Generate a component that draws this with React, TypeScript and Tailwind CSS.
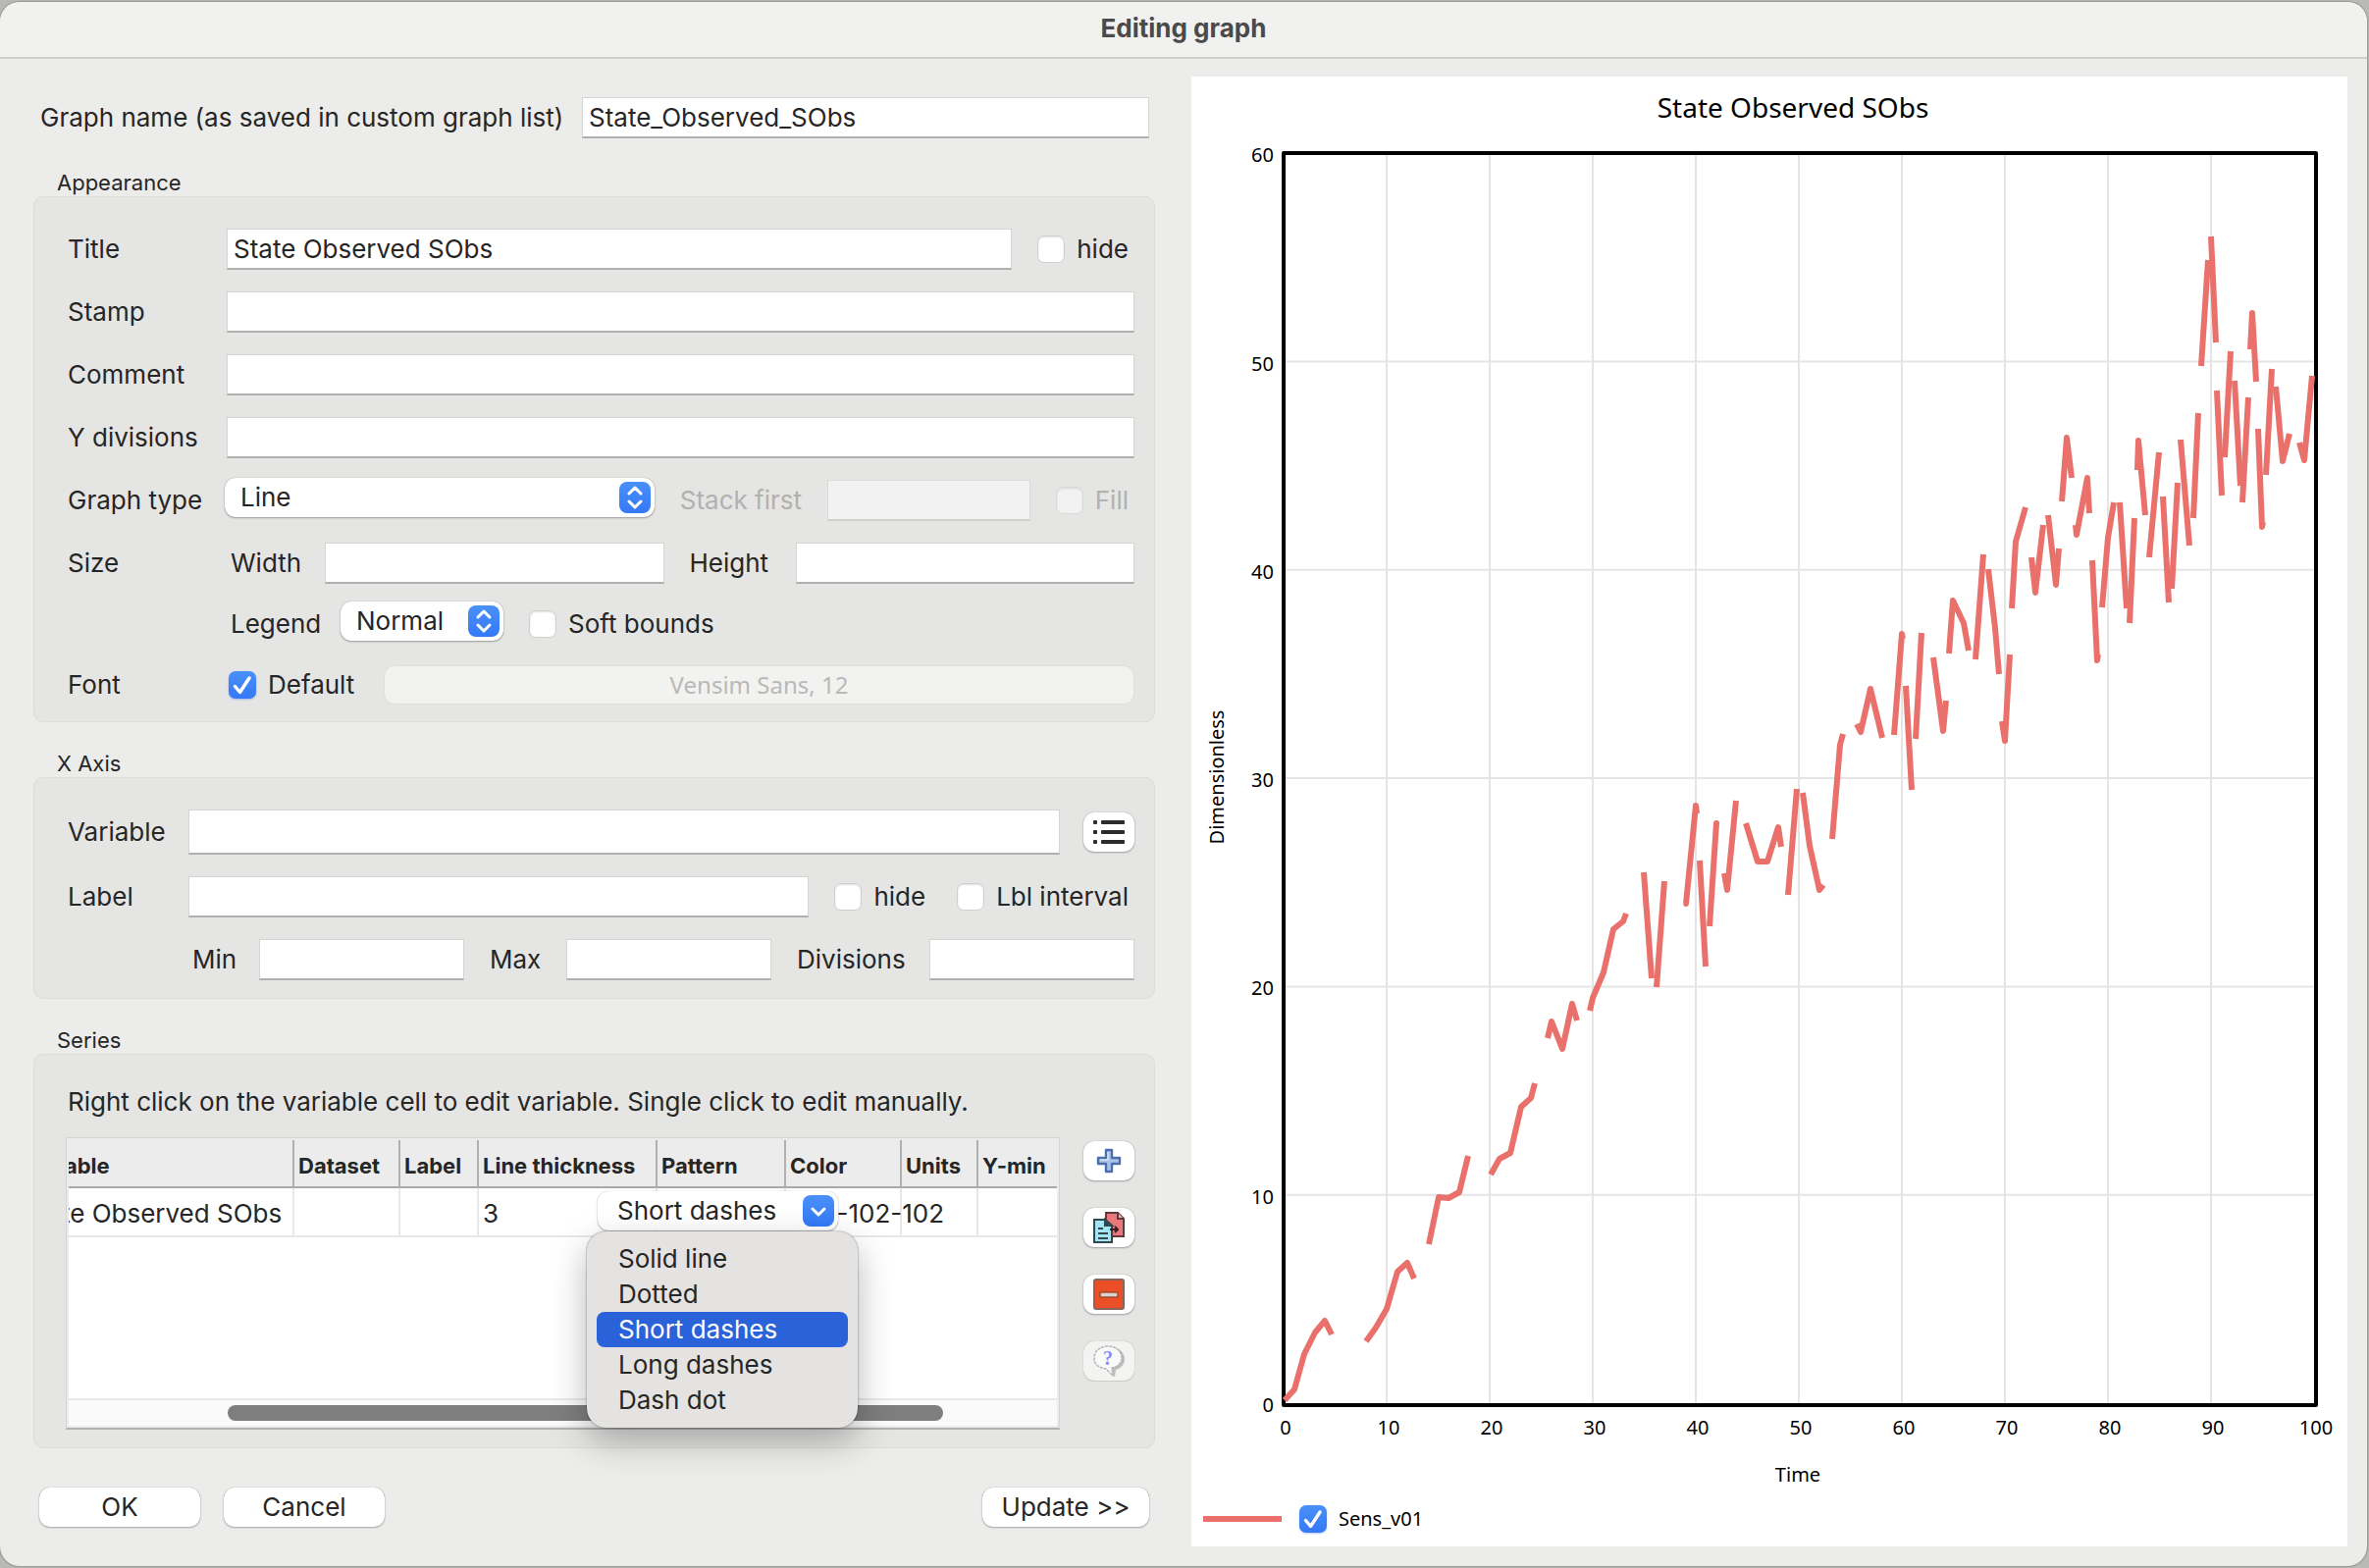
import type { ReactNode } from 'react'

// Each run of the series is drawn on its own, missing samples leave a gap
const seriesRuns = [
  '95,1349 105,1338 115,1302 126,1280 136,1268 143,1282',
  '178,1289 188,1275 199,1256 210,1218 220,1209 227,1225',
  '242,1190 252,1142 262,1143 273,1137 282,1100',
  '305,1119 314,1103 325,1097 336,1050 346,1041 350,1026',
  '363,980 367,963 378,991 388,945 393,962',
  '406,952 409,939 420,913 430,869 440,861 443,853',
  '461,811 469,919',
  '474,928 482,820',
  '503,842 504,843 514,743 515,751',
  '518,799 524,907',
  '528,866 535,761 535,763',
  '543,812 546,829 555,738',
  '565,761 577,800 587,800 598,765 601,785',
  '608,834 617,726',
  '623,730 630,784 640,829 644,824',
  '653,777 661,681 664,670',
  '678,660 682,668 692,624 704,674',
  '716,671 724,568 725,573',
  '728,621 734,727',
  '738,675 744,567',
  '756,592 766,667 769,636',
  '772,588 776,534 787,557 792,585',
  '799,594 807,487',
  '812,502 819,562 823,609',
  '826,657 829,677 834,589',
  '836,542 840,474 850,439',
  '856,490 860,526 868,457',
  '873,447 881,518 884,481',
  '887,433 892,368 897,409',
  '901,457 902,467 913,409 915,445',
  '918,493 923,595 924,589',
  '928,541 934,470 940,434',
  '946,434 953,542',
  '956,557 961,450',
  '964,401 965,371 972,447',
  '976,490 986,383',
  '990,428 996,536',
  '999,522 1005,414',
  '1008,370 1017,478',
  '1021,450 1026,343',
  '1029,295 1036,187',
  '1039,163 1044,271',
  '1045,320 1050,427',
  '1053,388 1059,280',
  '1063,310 1069,417',
  '1071,434 1077,327',
  '1079,278 1081,241 1085,311',
  '1087,359 1091,459 1092,454',
  '1095,406 1101,298',
  '1105,316 1112,392 1119,364',
  '1129,373 1134,391 1142,305',
]

const xTicks = [0, 10, 20, 30, 40, 50, 60, 70, 80, 90, 100]
const yTicks = [0, 10, 20, 30, 40, 50, 60]

const columns = [
  { label: 'Variable', width: 'w-[280px]', value: 'State Observed SObs' },
  { label: 'Dataset', width: 'w-[108px]', value: '' },
  { label: 'Label', width: 'w-[80px]', value: '' },
  { label: 'Line thickness', width: 'w-[182px]', value: '3' },
  { label: 'Pattern', width: 'w-[131px]', value: '' },
  { label: 'Color', width: 'w-[118px]', value: '255-102-102' },
  { label: 'Units', width: 'w-[78px]', value: '' },
  { label: 'Y-min', width: 'w-[83px]', value: '' },
]

const patterns = ['Solid line', 'Dotted', 'Short dashes', 'Long dashes', 'Dash dot']

function TextField({ id, value, className = '', disabled }: {
  id: string
  value?: string
  className?: string
  disabled?: boolean
}) {
  return (
    <input
      id={id}
      type="text"
      defaultValue={value}
      disabled={disabled}
      className={`h-[42px] min-w-0 border border-b-2 border-[#d4d4d3] border-b-[#b0b0b0] bg-white px-1.5 outline-none disabled:border-[#dadad9] disabled:border-b-[#cfcfce] disabled:bg-[#f2f2f2] ${className}`}
    />
  )
}

function Checkbox({ children, checked, disabled, className = '' }: {
  children: ReactNode
  checked?: boolean
  disabled?: boolean
  className?: string
}) {
  return (
    <label className={`flex items-center gap-3 whitespace-nowrap ${disabled ? 'text-[#b1b1b0]' : ''} ${className}`}>
      <span className="relative size-7 shrink-0">
        <input
          type="checkbox"
          defaultChecked={checked}
          disabled={disabled}
          className="peer block size-7 appearance-none rounded-[7px] border border-[#cfcfce] bg-white shadow-[inset_0_1px_2px_rgba(0,0,0,0.12)] checked:border-0 checked:bg-linear-to-b checked:from-[#4a90f8] checked:to-[#3478f6] checked:shadow-[0_1px_2px_rgba(52,120,246,0.4)] disabled:border-[#dadad9] disabled:bg-[#f2f2f2]"
        />
        <svg viewBox="0 0 28 28" fill="none" className="pointer-events-none absolute inset-0 hidden peer-checked:block">
          <path d="M6.5 15.5 11.5 21.5 21 7" stroke="white" strokeWidth="3.4" strokeLinecap="round" strokeLinejoin="round" />
        </svg>
      </span>
      {children}
    </label>
  )
}

function Popup({ id, value, className }: { id: string; value: string; className: string }) {
  return (
    <span className={`relative mb-1.5 ${className}`}>
      <select
        id={id}
        className="block h-10 w-full appearance-none rounded-[11px] bg-white pl-4 shadow-[0_0_1px_rgba(0,0,0,0.4),0_1px_2px_rgba(0,0,0,0.3)] outline-none"
      >
        <option>{value}</option>
      </select>
      <span className="pointer-events-none absolute top-1 right-1 flex size-8 items-center justify-center rounded-lg bg-linear-to-b from-[#4a90f8] to-[#3478f6]">
        <svg width="32" height="32" viewBox="0 0 32 32" fill="none">
          <path d="M10 12 16 6 22 12M10 20 16 26 22 20" stroke="white" strokeWidth="3" strokeLinecap="round" strokeLinejoin="round" />
        </svg>
      </span>
    </span>
  )
}

function PushButton({ children, className }: { children: ReactNode; className: string }) {
  return (
    <button
      type="button"
      className={`h-10 rounded-[11px] bg-white shadow-[0_0_1px_rgba(0,0,0,0.4),0_1px_2px_rgba(0,0,0,0.28)] ${className}`}
    >
      {children}
    </button>
  )
}

function IconButton({ label, children, disabled }: { label: string; children: ReactNode; disabled?: boolean }) {
  return (
    <button
      type="button"
      aria-label={label}
      disabled={disabled}
      className="flex h-10 w-[52px] shrink-0 items-center justify-center rounded-[11px] bg-white shadow-[0_0_1px_rgba(0,0,0,0.4),0_1px_2px_rgba(0,0,0,0.28)] disabled:bg-[#f3f3f2] disabled:shadow-[0_0_1px_rgba(0,0,0,0.3),0_1px_1px_rgba(0,0,0,0.1)]"
    >
      {children}
    </button>
  )
}

function Group({ title, children, className }: { title: string; children: ReactNode; className: string }) {
  return (
    <section>
      <h2 className="pl-6 text-[22px] leading-7">{title}</h2>
      <div className={`flex flex-col rounded-[10px] border border-[#dcdcdb] bg-[#e5e5e4] pt-8 pr-5 pl-[34px] ${className}`}>
        {children}
      </div>
    </section>
  )
}

function Chart() {
  return (
    <svg viewBox="0 0 1178 1442" className="block w-full font-['Noto_Sans',sans-serif]" fill="black" fontSize="20">
      <text x="613" y="42" fontSize="28" textAnchor="middle">State Observed SObs</text>
      {xTicks.slice(1, -1).map((t) => (
        <path key={t} d={`M${94 + t * 10.5} 80V1352`} stroke="#e5e5e5" strokeWidth="2" />
      ))}
      {yTicks.slice(1, -1).map((v) => (
        <path key={v} d={`M96 ${1352 - v * 21.23}H1144`} stroke="#e5e5e5" strokeWidth="2" />
      ))}
      <rect x="94" y="78" width="1052" height="1276" fill="none" stroke="black" strokeWidth="4" strokeLinejoin="round" />
      {seriesRuns.map((points) => (
        <polyline key={points} points={points} fill="none" stroke="#ea706b" strokeWidth="6" strokeLinejoin="round" />
      ))}
      {xTicks.map((t) => (
        <text key={t} x={96 + t * 10.5} y="1384" textAnchor="middle">{t}</text>
      ))}
      {yTicks.map((v) => (
        <text key={v} x="84" y={1361 - v * 21.23} textAnchor="end">{v}</text>
      ))}
      <text x="618" y="1432" textAnchor="middle">Time</text>
      <text transform="translate(33 714) rotate(-90)" textAnchor="middle">Dimensionless</text>
    </svg>
  )
}

function SeriesTable() {
  return (
    <div className="relative min-w-0 flex-1">
      <div className="flex h-[298px] flex-col overflow-hidden border border-b-2 border-[#d4d4d3] border-b-[#b0b0b0] bg-[#ececeb] p-0.5">
        <div className="flex-1 overflow-hidden bg-white">
          {/* scrolled to the right, so the first column is cut off */}
          <table className="-ml-[51px] w-[1060px] table-fixed border-collapse">
            <thead>
              <tr className="h-12 border-b-2 border-[#a9a9a9] bg-[#ececec] text-[22px]">
                {columns.map((c) => (
                  <th key={c.label} className={`border-r-2 border-[#b0b0b0] pt-1 pl-1 text-left font-bold whitespace-nowrap ${c.width}`}>
                    {c.label}
                  </th>
                ))}
              </tr>
            </thead>
            <tbody>
              <tr className="h-[50px] border-b-2 border-[#e8e8e8]">
                {columns.map((c) => (
                  <td key={c.label} className="border-r-2 border-[#e8e8e8] pt-1 pl-1 whitespace-nowrap">
                    {c.value}
                  </td>
                ))}
              </tr>
            </tbody>
          </table>
        </div>
        <div className="flex h-7 items-center border-t-2 border-[#e8e8e8] bg-[#fafafa]">
          <div className="ml-[162px] h-4 w-[729px] rounded-full bg-[#7e7e7e]" />
        </div>
      </div>

      {/* Pattern cell editor */}
      <div className="absolute top-[55px] left-[542px] w-[245px]">
        <select
          aria-label="Pattern"
          defaultValue="Short dashes"
          className="block h-10 w-full appearance-none rounded-[11px] bg-white pl-5 shadow-[0_0_1px_rgba(0,0,0,0.3),0_1px_2px_rgba(0,0,0,0.28)] outline-none"
        >
          {patterns.map((p) => (
            <option key={p}>{p}</option>
          ))}
        </select>
        <span className="pointer-events-none absolute top-1 right-1 flex size-8 rounded-lg bg-linear-to-b from-[#4a90f8] to-[#3478f6]">
          <svg width="32" height="32" viewBox="0 0 32 32" fill="none">
            <path d="M10 14 16 20 22 14" stroke="white" strokeWidth="3" strokeLinecap="round" strokeLinejoin="round" />
          </svg>
        </span>
      </div>
      <ul
        role="listbox"
        aria-label="Pattern"
        className="absolute top-24 left-[531px] w-[276px] rounded-[20px] bg-[#e4e3e2] p-2.5 shadow-[0_0_2px_rgba(0,0,0,0.55),0_14px_36px_rgba(0,0,0,0.28)]"
      >
        {patterns.map((p) => (
          <li
            key={p}
            role="option"
            aria-selected={p === 'Short dashes'}
            className="h-9 rounded-lg pl-[22px] leading-9 aria-selected:bg-[#2962d9] aria-selected:text-white"
          >
            {p}
          </li>
        ))}
      </ul>
    </div>
  )
}

export default function App() {
  return (
    <div className="min-h-screen bg-[#b9b9b8] pt-0.5 pr-0.5 pb-0.5 font-['Inter',sans-serif] text-[26px] leading-8 text-[#262626]">
      <div className="flex min-h-[calc(100vh-4px)] flex-col overflow-hidden rounded-[20px] bg-[#ececeb] shadow-[0_0_2px_rgba(0,0,0,0.6)]">
        <header className="flex h-[58px] items-center justify-center border-b-2 border-[#cfcfce] bg-[#f1f1f0] pb-0.5">
          <h1 className="font-bold text-[#4a4a4a]">Editing graph</h1>
        </header>

        <main className="grid flex-1 grid-cols-[minmax(0,1143fr)_minmax(0,1178fr)] gap-[37px] pt-[18px] pr-5 pb-5 pl-[34px]">
          <form className="flex flex-col gap-7 pt-[18px]">
            <div className="flex h-12 items-center pr-1.5 pl-[7px]">
              <label htmlFor="name" className="w-[552px]">Graph name (as saved in custom graph list)</label>
              <TextField id="name" value="State_Observed_SObs" className="flex-1" />
            </div>

            <Group title="Appearance" className="gap-5 pb-4">
              <div className="flex flex-col gap-[22px]">
                <div className="flex items-center">
                  <label htmlFor="title" className="w-[162px]">Title</label>
                  <TextField id="title" value="State Observed SObs" className="flex-1" />
                  <Checkbox className="pr-1.5 pl-[26px]">hide</Checkbox>
                </div>
                {['Stamp', 'Comment', 'Y divisions'].map((name) => (
                  <div key={name} className="flex items-center">
                    <label htmlFor={name} className="w-[162px]">{name}</label>
                    <TextField id={name} className="flex-1" />
                  </div>
                ))}
                <div className="flex h-[42px] items-center">
                  <label htmlFor="type" className="w-[160px]">Graph type</label>
                  <Popup id="type" value="Line" className="flex-1" />
                  <label htmlFor="stack" className="w-[176px] pl-[26px] text-[#b1b1b0]">Stack first</label>
                  <TextField id="stack" disabled className="w-[207px]" />
                  <Checkbox disabled className="pr-1.5 pl-[26px]">Fill</Checkbox>
                </div>
                <div className="flex items-center">
                  <span className="w-[162px]">Size</span>
                  <label htmlFor="width" className="w-[100px] pl-1">Width</label>
                  <TextField id="width" className="flex-1" />
                  <label htmlFor="height" className="w-[134px] pl-[26px]">Height</label>
                  <TextField id="height" className="flex-1" />
                </div>
              </div>
              <div className="flex h-[42px] items-center pl-[162px]">
                <label htmlFor="legend" className="w-[116px] pl-1">Legend</label>
                <Popup id="legend" value="Normal" className="w-[166px]" />
                <Checkbox className="pl-[26px]">Soft bounds</Checkbox>
              </div>
              <div className="flex h-[42px] items-center">
                <span className="w-[162px]">Font</span>
                <Checkbox checked className="w-[160px] pl-0.5">Default</Checkbox>
                <button
                  type="button"
                  disabled
                  className="h-10 flex-1 rounded-[11px] border border-[#dededd] bg-[#f2f2f1] font-['Noto_Sans',sans-serif] text-2xl text-[#b9b9b8]"
                >
                  Vensim Sans, 12
                </button>
              </div>
            </Group>

            <Group title="X Axis" className="gap-[22px] pb-[18px]">
              <div className="flex h-[46px] items-center">
                <label htmlFor="variable" className="w-[123px]">Variable</label>
                <TextField id="variable" className="mr-6 h-[46px] flex-1" />
                <IconButton label="Choose variable">
                  <svg width="32" height="26" viewBox="0 0 32 26" fill="#2b2b2b">
                    {[0, 10, 20].map((y) => (
                      <g key={y}>
                        <rect x="0" y={y + 1} width="4" height="4" rx="1" />
                        <rect x="8" y={y + 1} width="24" height="4" rx="1" />
                      </g>
                    ))}
                  </svg>
                </IconButton>
              </div>
              <div className="flex items-center">
                <label htmlFor="label" className="w-[123px]">Label</label>
                <TextField id="label" className="flex-1" />
                <Checkbox className="pl-[26px]">hide</Checkbox>
                <Checkbox className="pr-1.5 pl-8">Lbl interval</Checkbox>
              </div>
              <div className="flex items-center pl-[123px]">
                <label htmlFor="min" className="w-[72px] pl-1">Min</label>
                <TextField id="min" className="flex-1" />
                <label htmlFor="max" className="w-[104px] pl-[26px]">Max</label>
                <TextField id="max" className="flex-1" />
                <label htmlFor="divisions" className="w-[161px] pl-[26px]">Divisions</label>
                <TextField id="divisions" className="flex-1" />
              </div>
            </Group>

            <Group title="Series" className="gap-5 pb-[18px]">
              <p>Right click on the variable cell to edit variable. Single click to edit manually.</p>
              <div className="-ml-0.5 flex gap-6">
                <SeriesTable />
                <div className="flex flex-col gap-7 pt-1">
                  <IconButton label="Add series">
                    <svg width="26" height="26" viewBox="0 0 26 26">
                      <path d="M10 2h6v8h8v6h-8v8h-6v-8H2v-6h8z" fill="#a9c3e6" stroke="#4e6fae" strokeWidth="2.4" strokeLinejoin="round" />
                      <path d="M12 4v8H4" fill="none" stroke="#d5e3f5" strokeWidth="1.5" />
                    </svg>
                  </IconButton>
                  <IconButton label="Copy series">
                    <svg width="32" height="32" viewBox="0 0 32 32" strokeWidth="2">
                      <path d="M13 1h12l6 6v18H13z" fill="#e9787d" stroke="#5f3a3c" />
                      <path d="M25 1v6h6" fill="#f3b3b5" stroke="#5f3a3c" />
                      <path d="M1 8h11l7 6v17H1z" fill="#a5e4f3" stroke="#33464b" />
                      <path d="M12 8v6h7z" fill="#33464b" stroke="#33464b" />
                      <path d="M5 17h5M5 22h10M5 27h10" stroke="#33464b" />
                      <path d="M17 18h8M22 15l3 3-3 3" fill="none" stroke="#3a1f21" />
                    </svg>
                  </IconButton>
                  <IconButton label="Remove series">
                    <svg width="32" height="32" viewBox="0 0 32 32">
                      <rect x="1" y="1" width="30" height="30" rx="2" fill="#ea4f27" stroke="#86665c" strokeWidth="2" />
                      <rect x="7" y="14" width="18" height="5" fill="#d8d3d1" stroke="#a8492f" strokeWidth="1.5" />
                    </svg>
                  </IconButton>
                  <IconButton label="Help" disabled>
                    <svg width="32" height="32" viewBox="0 0 32 32">
                      <path d="M18 2c8 0 14 5 14 12 0 5-3 9-9 11l-1 7-6-7z" fill="#bdbdbd" />
                      <path d="M15 1C7 1 1 6 1 13s5 10 12 11l7 7-1-8c6-1 10-5 10-10 0-7-6-12-14-12z" fill="#fafafa" stroke="#b5b5b5" strokeWidth="1.5" strokeDasharray="3 1" />
                      <text x="15" y="20" textAnchor="middle" fontSize="20" fontWeight="700" fontFamily="Liberation Serif, serif" fill="#8f8cf5">?</text>
                    </svg>
                  </IconButton>
                </div>
              </div>
            </Group>

            <div className="flex gap-6 pt-3 pr-1.5 pl-1.5">
              <PushButton className="w-[164px]">OK</PushButton>
              <PushButton className="w-[164px]">Cancel</PushButton>
              <PushButton className="ml-auto w-[170px]">Update &gt;&gt;</PushButton>
            </div>
          </form>

          <section aria-label="Preview" className="flex flex-col bg-white">
            <Chart />
            <div className="flex h-14 items-center gap-[18px] pl-3 font-['Noto_Sans',sans-serif] text-xl text-black">
              <span className="h-1.5 w-20 bg-[#ea706b]" />
              <Checkbox checked>Sens_v01</Checkbox>
            </div>
          </section>
        </main>
      </div>
    </div>
  )
}
